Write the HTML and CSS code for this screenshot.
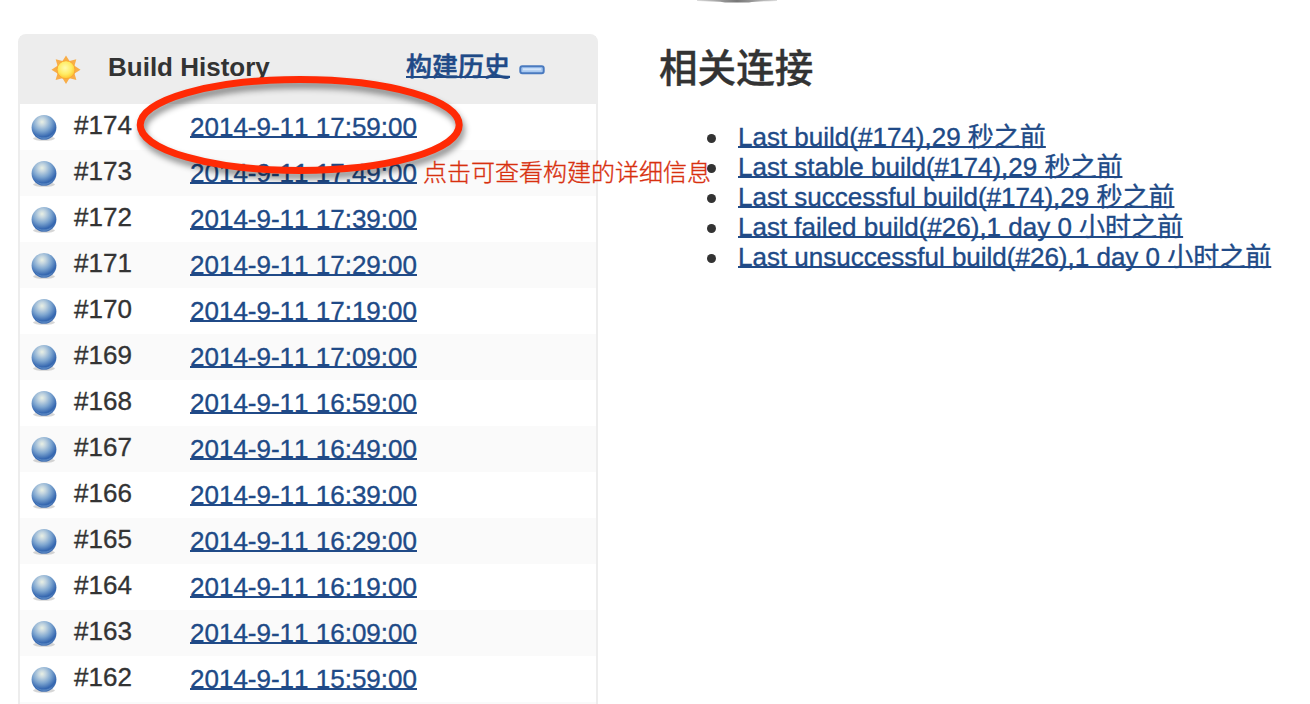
FILE: index.html
```html
<!DOCTYPE html>
<html lang="zh-CN">
<head>
<meta charset="utf-8">
<title>Build History</title>
<link rel="stylesheet" href="styles.css">
</head>
<body>
<svg class="defs" width="0" height="0" aria-hidden="true">
  <defs>
    <radialGradient id="ballFill" cx=".42" cy=".28" r=".74">
      <stop offset="0" stop-color="#e9f0e4"/><stop offset=".2" stop-color="#c3d5e0"/><stop offset=".5" stop-color="#7ea6d0"/><stop offset=".82" stop-color="#3567b0"/><stop offset="1" stop-color="#4a76b4"/>
    </radialGradient>
    <radialGradient id="sunFill" cx=".45" cy=".4" r=".6">
      <stop offset="0" stop-color="#fffbb0"/><stop offset=".6" stop-color="#ffec63"/><stop offset="1" stop-color="#ffc52e"/>
    </radialGradient>
    <linearGradient id="tipShade" x1="0" x2="1" y1="0" y2="0">
      <stop offset="0" stop-color="#ddd"/><stop offset=".3" stop-color="#999"/><stop offset=".5" stop-color="#777"/><stop offset=".7" stop-color="#999"/><stop offset="1" stop-color="#ddd"/>
    </linearGradient>
    <symbol id="ball" viewBox="0 0 28 28">
      <ellipse cx="14" cy="24.600" rx="11" ry="2.200" fill="#777" opacity=".3"/>
      <circle cx="14" cy="13.400" r="12.400" fill="url(#ballFill)"/>
      <path d="M5 20a11 11 0 0 0 18 0a13 13 0 0 1-18 0z" fill="#8fb8e3" opacity=".4"/>
    </symbol>
  </defs>
</svg>
<div class="page">
  <svg class="edge" viewBox="0 0 80 3"><path d="M0 0H80V1Q60 1.200 52 2.400H28Q20 1.200 0 1z" fill="url(#tipShade)"/></svg>
  <section class="history">
    <header class="history-head">
      <svg class="sun" viewBox="0 0 30 30">
        <path d="M15 .5l3.500 5.500 6.800-1.800-1.800 6.600 6 3.900-6 3.700 1.900 6.700-6.900-1.800L15 29l-3.500-5.700-6.900 1.800 1.900-6.700-6-3.700 6-3.900-1.800-6.600 6.800 1.800z" fill="#f8ad48"/>
        <circle cx="15" cy="14.700" r="9" fill="url(#sunFill)" stroke="#f9a936" stroke-width="1"/>
      </svg>
      <span class="title">Build History</span>
      <a class="trend">构建历史</a>
      <svg class="collapse" viewBox="0 0 26 10">
        <rect x="1.300" y="1.300" width="23.400" height="7" rx="2" fill="#a9c9f0" stroke="#4a7abf" stroke-width="2"/>
        <path d="M4 4.300h18" stroke="#d2e4fa" stroke-width="2"/>
      </svg>
    </header>
    <div class="row"><svg class="ball"><use href="#ball"/></svg><span class="num">#174</span><a class="date">2014-9-11 17:59:00</a></div>
    <div class="row"><svg class="ball"><use href="#ball"/></svg><span class="num">#173</span><a class="date">2014-9-11 17:49:00</a></div>
    <div class="row"><svg class="ball"><use href="#ball"/></svg><span class="num">#172</span><a class="date">2014-9-11 17:39:00</a></div>
    <div class="row"><svg class="ball"><use href="#ball"/></svg><span class="num">#171</span><a class="date">2014-9-11 17:29:00</a></div>
    <div class="row"><svg class="ball"><use href="#ball"/></svg><span class="num">#170</span><a class="date">2014-9-11 17:19:00</a></div>
    <div class="row"><svg class="ball"><use href="#ball"/></svg><span class="num">#169</span><a class="date">2014-9-11 17:09:00</a></div>
    <div class="row"><svg class="ball"><use href="#ball"/></svg><span class="num">#168</span><a class="date">2014-9-11 16:59:00</a></div>
    <div class="row"><svg class="ball"><use href="#ball"/></svg><span class="num">#167</span><a class="date">2014-9-11 16:49:00</a></div>
    <div class="row"><svg class="ball"><use href="#ball"/></svg><span class="num">#166</span><a class="date">2014-9-11 16:39:00</a></div>
    <div class="row"><svg class="ball"><use href="#ball"/></svg><span class="num">#165</span><a class="date">2014-9-11 16:29:00</a></div>
    <div class="row"><svg class="ball"><use href="#ball"/></svg><span class="num">#164</span><a class="date">2014-9-11 16:19:00</a></div>
    <div class="row"><svg class="ball"><use href="#ball"/></svg><span class="num">#163</span><a class="date">2014-9-11 16:09:00</a></div>
    <div class="row"><svg class="ball"><use href="#ball"/></svg><span class="num">#162</span><a class="date">2014-9-11 15:59:00</a></div>
    <div class="row"></div>
  </section>
  <section class="related">
    <h2 class="related-title">相关连接</h2>
    <ul class="links">
      <li><a>Last build(#174),29 秒之前</a></li>
      <li><a>Last stable build(#174),29 秒之前</a></li>
      <li><a>Last successful build(#174),29 秒之前</a></li>
      <li><a>Last failed build(#26),1 day 0 小时之前</a></li>
      <li><a>Last unsuccessful build(#26),1 day 0 小时之前</a></li>
    </ul>
  </section>
  <svg class="ring" viewBox="0 0 350 120"><ellipse cx="169.700" cy="55" rx="159.500" ry="45.500" fill="none" stroke="#ff2a05" stroke-width="7"/></svg>
  <span class="note">点击可查看构建的详细信息</span>
</div>
</body>
</html>
```

FILE: styles.css
```css
* { box-sizing: border-box; }
body {
  margin: 0;
  background: #fff;
  color: #333;
  font: 26px/30px "Liberation Sans", "Noto Sans CJK SC", sans-serif;
  font-kerning: none;
  -webkit-text-stroke: .35px currentColor;
}
.defs { position: absolute; }
.page {
  position: relative;
  display: flex;
  align-items: flex-start;
  gap: 60px;
  height: 704px;
  padding: 34px 0 0 18px;
  overflow: hidden;
}
a {
  color: #204a87;
  text-decoration: underline;
  text-decoration-thickness: 2px;
  text-decoration-skip-ink: none;
  text-underline-offset: 0;
}
.history {
  flex: none;
  width: 580px;
  border: 2px solid #ededed;
  border-radius: 8px 8px 0 0;
}
.history-head {
  display: flex;
  height: 68px;
  padding: 16px 0 0 30px;
  background: #ededed;
  font-weight: bold;
}
.sun { width: 30px; height: 30px; margin: 3px 27px 0 1px; }
.title { width: 298px; -webkit-text-stroke: 0; }
.trend { font-weight: 500; -webkit-text-stroke: .5px currentColor; }
.collapse { width: 26px; height: 10px; margin: 13px 0 0 9px; }
.row {
  display: flex;
  height: 46px;
  padding-left: 10px;
}
.row:nth-child(odd) { background: #fafafa; }
.ball { width: 28px; height: 28px; margin-top: 10px; }
.num { width: 116px; margin: 6px 0 0 16px; }
.date { margin-top: 8px; }
.related-title {
  margin: 12px 0 0 1px;
  font-size: 38.600px;
  line-height: 46px;
  font-weight: 500;
}
.links {
  margin: 30px 0 0;
  padding-left: 50px;
  list-style: none;
  white-space: nowrap;
}
.links li { display: flex; align-items: center; height: 30px; }
.links li::before {
  content: "";
  width: 9px;
  height: 9px;
  margin: 2px 21px 0 0;
  border-radius: 50%;
  background: #333;
  transform: translateX(-1px);
}
.edge { position: absolute; left: 697px; top: 0; width: 80px; height: 3px; }
.ring {
  position: absolute;
  left: 130px;
  top: 70px;
  width: 350px;
  height: 120px;
  filter: drop-shadow(2px 5px 3px rgba(0, 0, 0, .45));
}
.note {
  position: absolute;
  left: 423px;
  top: 158px;
  color: #d8300f;
  font-size: 24px;
  font-weight: 300;
  white-space: nowrap;
}
```
